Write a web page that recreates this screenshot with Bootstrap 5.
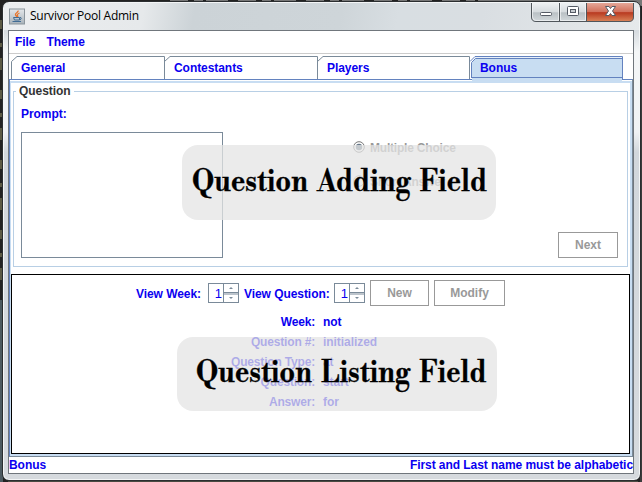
<!DOCTYPE html>
<html lang="en">
<head>
<meta charset="utf-8">
<title>Survivor Pool Admin</title>
<link rel="stylesheet" href="https://cdn.jsdelivr.net/npm/bootstrap@5.3.0/dist/css/bootstrap.min.css">
<style>
*{box-sizing:border-box}
body{width:642px;height:482px;overflow:hidden;background:#222;font:bold 12px/15px "Liberation Sans",Arial,sans-serif;letter-spacing:-.06px;color:#0a00f0;padding:1px 1px 1px 2px}
.desk{position:absolute;inset:0;z-index:-1}
.win{width:639px;height:480px;border:1px solid #2b2e30;border-radius:7px;background:linear-gradient(180deg,#d3d8dc 0,#d8dde1 30px,#f4f6f7 50px,#f0f2f4 130px,#d2d7dc 150px,#d6dade 100%);box-shadow:inset 0 0 0 1px #f3f5f6;padding:0 6px 6px 5px}
.titlebar{height:27px;padding-left:5px;color:#000;background:linear-gradient(100deg,#eceef0 0,#e6e9eb 22%,#ccd3d7 30%,#ced5d9 53%,#d8dee2 62%,#d9dee2 75%,#e6e9eb 100%);margin:1px -5px 0 -4px;border-radius:5px 5px 0 0}
.titletext{font:12px/16px "Open Sans","Noto Sans",sans-serif;letter-spacing:-.24px;margin:5px 0 0 5px}
.client{width:626px;height:444px;border:1px solid #70767c;background:#fff}
.menus{height:23px;border-bottom:1px solid #ccc;padding:4px 0 0 6px;gap:11px}
.tabs{height:25px;padding:2px 0 0 2px}
.tabitem{width:153px;height:23px;padding:5px 0 0 10px;position:relative}
.tabitem svg{position:absolute;left:0;top:0;overflow:visible}
.tabitem span{position:relative}
.pane{height:378px;border:1px solid #7a8a99;border-top-color:#6382bf;border-left-color:#6382bf;padding:1px 0 0}
.pane-in{height:375px;border:solid #c8ddf2;border-width:2px 2px 2px 1px}
.group{height:185px;padding:1px 2px 0;margin:0 0 6px}
.frame{height:176px;margin-top:7px;border:1px solid #b8cfe5}
.legendtext{color:#333;background:#fff;width:fit-content;padding:0 3px;margin:-8px 0 0 2px;height:15px}
.prompt{padding-left:7px;margin-top:8px}
.area{width:202px;height:126px;border:1px solid #7a8a99;margin:10px 0 0 7px}
.off{color:#999;margin:18px 0 0 130px;letter-spacing:-.2px;line-height:17px}
.radio-dot{margin:1px 5px 0 0}
.jbtn{border:1px solid #999;border-radius:0;background:#fff;color:#999;font:bold 12px/15px "Liberation Sans",Arial,sans-serif;height:26px;padding:1px 0 0;text-align:center}
.listing{height:180px;border:1px solid #000;padding-top:5px}
.spin{width:31px;height:20px;border:1px solid #7a8a99;font-weight:400;font-size:13px;margin-top:3px}
.spin .num{width:14px;text-align:right;padding-right:1px;line-height:20px}
.spin svg{margin:-1px -1px -1px 0;flex:none}
.result{height:20px;line-height:15px}
.result .k{width:303px;text-align:right;margin-right:8px;letter-spacing:-.18px}
.note{position:absolute;background:rgba(228,228,228,.75);color:#000;font:bold 30px/36px "Libre Bodoni","Liberation Serif",serif;white-space:nowrap}
.note span{display:inline-block;transform:scaleX(.9);transform-origin:0 0;word-spacing:5.5px;letter-spacing:0;-webkit-text-stroke:.35px #000}
.note.a{left:182px;top:145px;width:314px;height:75px;border-radius:16px;padding:19px 0 0 10px}
.note.b{left:177px;top:337px;width:320px;height:74px;border-radius:16px;padding:18px 0 0 19px}
.status{height:16px;line-height:17px}
</style>
<script src="https://cdn.jsdelivr.net/npm/bootstrap@5.3.0/dist/js/bootstrap.bundle.min.js"></script>
</head>
<body>
<svg class="desk" width="642" height="482"><rect width="642" height="482" fill="#222"/><rect y="300" width="3" height="182" fill="#4c5a60"/><path d="M0 20V290" stroke="#5c5a44" stroke-width="4" stroke-dasharray="9 14 4 11 12 20"/><path d="M170 0H520" stroke="#777" stroke-width="2" stroke-dasharray="18 6 9 3 22 10"/><rect x="500" width="142" height="6" fill="#777"/><rect x="640" y="20" width="2" height="462" fill="#3c3c3c"/><rect y="481" x="8" width="630" height="1" fill="#4a4a42"/></svg>
<div class="win">
  <div class="titlebar d-flex">
    <svg style="margin-top:5px" width="16" height="17" viewBox="0 0 16 17"><defs><linearGradient id="jg" x1="0" y1="0" x2="0" y2="1"><stop offset="0" stop-color="#e3e7ea"/><stop offset="1" stop-color="#a9b3bb"/></linearGradient></defs><rect x=".5" y="1" width="15" height="15" fill="url(#jg)" stroke="#8b959c"/><path d="M9 2.500C10 4.500 5.500 5 6.500 7L8 9M10.500 5C8 6 8 7 9 9" fill="none" stroke="#e8742a" stroke-width="1.300"/><path d="M4.500 9.500H10.500V12H5.500ZM11 9.500Q13.500 9.500 11 12M3.500 13.500H12" fill="none" stroke="#416c94"/></svg>
    <div class="titletext">Survivor Pool Admin</div>
    <svg class="ms-auto" width="104" height="20" viewBox="0 0 104 20"><defs><linearGradient id="g1" x1="0" y1="0" x2="0" y2="1"><stop offset="0" stop-color="#edf0f2"/><stop offset=".5" stop-color="#d5dadd"/><stop offset=".52" stop-color="#b9c0c4"/><stop offset="1" stop-color="#d3d9dc"/></linearGradient><linearGradient id="g2" x1="0" y1="0" x2="0" y2="1"><stop offset="0" stop-color="#e5a798"/><stop offset=".48" stop-color="#d1705b"/><stop offset=".52" stop-color="#b93a20"/><stop offset="1" stop-color="#d98459"/></linearGradient></defs>
    <path d="M.5 0V14Q.5 18.500 5 18.500H98Q102.500 18.500 102.500 14V0Z" fill="url(#g1)"/><path d="M56 0V18.500H98Q102.500 18.500 102.500 14V0Z" fill="url(#g2)"/><path d="M.5 0V14Q.5 18.500 5 18.500H98Q102.500 18.500 102.500 14V0M28.500 0V18M55.500 0V18" fill="none" stroke="#50565b"/><path d="M1.500 0V14Q2 17.500 5 17.500H27.500V.500M29.500 0V17.500H54.500V0" fill="none" stroke="#f3f5f6" opacity=".7"/>
    <rect x="9.500" y="9.500" width="11" height="3" rx="1" fill="#fff" stroke="#555b65"/><rect x="36.500" y="3.500" width="11" height="9" rx="1" fill="#fff" stroke="#555b65"/><rect x="39.500" y="6.500" width="5" height="3" fill="#c8cdd1" stroke="#555b65"/><path transform="translate(0 -1)" d="M74.500 4.500H78L79.500 6.500L81 4.500H84.500L81.500 9L84.500 13.500H81L79.500 11.500L78 13.500H74.500L77.500 9Z" fill="#fff" stroke="#555b65"/></svg>
    <div style="width:4px"></div>
  </div>
  <div class="client">
    <div class="menus d-flex"><span>File</span><span>Theme</span></div>
    <div class="tabs d-flex">
      <div class="tabitem"><svg width="154" height="23"><path d="M.5 23V5.500L6 .5H153.500V23" fill="#fff" stroke="#7a8a99"/></svg><span>General</span></div>
      <div class="tabitem"><svg width="154" height="23"><path d="M.5 5.500L6 .5H153.500V23" fill="none" stroke="#7a8a99"/></svg><span>Contestants</span></div>
      <div class="tabitem"><svg width="154" height="23"><path d="M.5 5.500L6 .5H152.500V23" fill="none" stroke="#7a8a99"/></svg><span>Players</span></div>
      <div class="tabitem"><svg width="153" height="27"><path d="M2 27V6L6 1H152V27Z" fill="#c8ddf2"/><path d="M0 5.500L5 .5H152.500V23M1.500 22V6.500L5.500 2.500H152M1 21.500H152" fill="none" stroke="#6382bf"/><path d="M6 1.500H152" stroke="#e8f0fa"/></svg><span>Bonus</span></div>
    </div>
    <div class="pane"><div class="pane-in">
      <div class="group">
        <div class="frame">
          <div class="legendtext">Question</div>
          <div class="prompt">Prompt:</div>
          <div class="d-flex">
            <div class="area"></div>
            <div class="off">
              <div class="d-flex"><svg width="12" height="12" class="radio-dot"><circle cx="6" cy="6" r="5.300" fill="#fff" stroke="#777"/><circle cx="6" cy="6" r="3.200" fill="#667788"/></svg>Multiple Choice</div>
              <div class="d-flex" style="margin-top:17px"><svg width="12" height="12" class="radio-dot"><circle cx="6" cy="6" r="5.300" fill="#fff" stroke="#999"/></svg>Short Answer</div>
            </div>
            <button class="jbtn btn ms-auto align-self-end" style="width:60px;margin-right:9px">Next</button>
          </div>
        </div>
      </div>
      <div class="listing">
        <div class="d-flex" style="padding-left:124px;height:35px">
          <span style="padding-top:7px;width:72px">View Week:</span>
          <div class="spin d-flex"><span class="num">1</span><svg width="16" height="20"><path d="M.5 0V20M15.500 0V20M0 .5H16M0 9.500H16M0 11H16M0 19.500H16" stroke="#7a8a99"/><path d="M6 6h4L8 4zM6 14h4L8 16z" fill="#7a8a99"/></svg></div>
          <span style="padding:7px 0 0 5px;width:95px" class="text-nowrap">View Question:</span>
          <div class="spin d-flex"><span class="num">1</span><svg width="16" height="20"><path d="M.5 0V20M15.500 0V20M0 .5H16M0 9.500H16M0 11H16M0 19.500H16" stroke="#7a8a99"/><path d="M6 6h4L8 4zM6 14h4L8 16z" fill="#7a8a99"/></svg></div>
          <button class="jbtn btn" style="width:59px;margin-left:5px">New</button>
          <button class="jbtn btn" style="width:71px;margin-left:5px">Modify</button>
        </div>
        <div class="result d-flex"><span class="k">Week:</span><span>not</span></div>
        <div class="result d-flex"><span class="k">Question #:</span><span>initialized</span></div>
        <div class="result d-flex"><span class="k">Question Type:</span><span>at</span></div>
        <div class="result d-flex"><span class="k">Question:</span><span>start</span></div>
        <div class="result d-flex"><span class="k">Answer:</span><span>for</span></div>
      </div>
    </div></div>
    <div class="status d-flex justify-content-between"><span>Bonus</span><span>First and Last name must be alphabetic</span></div>
  </div>
</div>
<div class="note a"><span>Question Adding Field</span></div>
<div class="note b"><span>Question Listing Field</span></div>
</body>
</html>
